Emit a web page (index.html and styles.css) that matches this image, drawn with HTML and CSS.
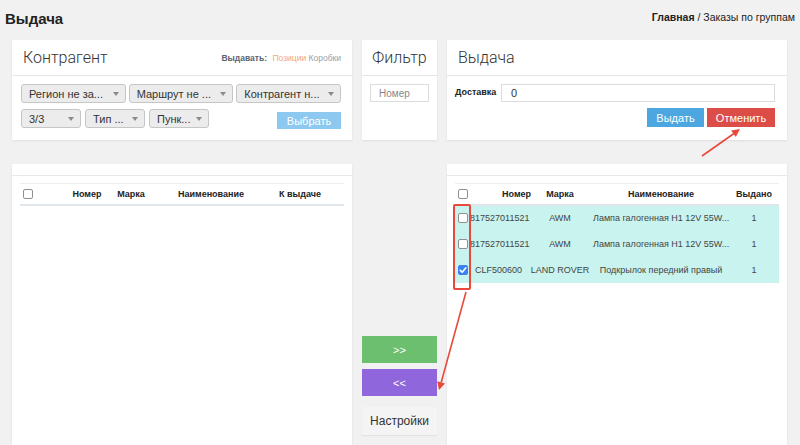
FILE: index.html
```html
<!DOCTYPE html>
<html lang="ru">
<head>
<meta charset="utf-8">
<link rel="stylesheet" href="styles.css">
</head>
<body>
<div class="page">
  <div class="topbar">
    <h1 class="title">Выдача</h1>
    <div class="crumbs"><b>Главная</b> / Заказы по группам</div>
  </div>

  <div class="grid">
    <div class="card">
      <div class="card-head">
        <span class="head-title">Контрагент</span>
        <span class="mode"><b>Выдавать:</b> <span class="mode-on">Позиции</span> <span class="mode-off">Коробки</span></span>
      </div>
      <div class="card-body filters">
        <div class="sel-row">
          <div class="sel sel-lg"><span>Регион не за...</span><i class="caret"></i></div>
          <div class="sel sel-lg"><span>Маршрут не ...</span><i class="caret"></i></div>
          <div class="sel sel-lg"><span>Контрагент н...</span><i class="caret"></i></div>
        </div>
        <div class="sel-row row2">
          <div class="sel sel-sm"><span>3/3</span><i class="caret"></i></div>
          <div class="sel sel-sm"><span>Тип ...</span><i class="caret"></i></div>
          <div class="sel sel-sm"><span>Пунк...</span><i class="caret"></i></div>
          <button class="btn btn-light-blue pick">Выбрать</button>
        </div>
      </div>
    </div>

    <div class="card">
      <div class="card-head center"><span class="head-title">Фильтр</span></div>
      <div class="card-body filter-body">
        <div class="inp inp-num">Номер</div>
      </div>
    </div>

    <div class="card">
      <div class="card-head"><span class="head-title">Выдача</span></div>
      <div class="card-body issue-body">
        <div class="deliv">
          <span class="lbl">Доставка</span>
          <div class="inp inp-wide">0</div>
        </div>
        <div class="acts">
          <button class="btn btn-blue">Выдать</button>
          <button class="btn btn-red">Отменить</button>
        </div>
      </div>
    </div>

    <div class="card tall">
      <div class="strip"></div>
      <div class="tbl-wrap">
        <table class="tbl tbl-left">
          <colgroup><col class="c1"><col class="c2"><col class="c3"><col class="c4"><col class="c5"><col></colgroup>
          <thead><tr><th class="cb-cell"><span class="cb"></span></th><th>Номер</th><th>Марка</th><th>Наименование</th><th>К выдаче</th><th></th></tr></thead>
        </table>
      </div>
    </div>

    <div class="mid">
      <button class="btn btn-green mbtn">&gt;&gt;</button>
      <button class="btn btn-purple mbtn">&lt;&lt;</button>
      <button class="btn btn-gray mbtn set">Настройки</button>
    </div>

    <div class="card tall">
      <div class="strip"></div>
      <div class="tbl-wrap">
        <table class="tbl tbl-right">
          <colgroup><col class="r1"><col class="r2"><col class="r3"><col class="r4"><col></colgroup>
          <thead><tr><th class="cb-cell"><span class="cb"></span></th><th class="th-num">Номер</th><th>Марка</th><th>Наименование</th><th>Выдано</th></tr></thead>
          <tbody>
            <tr><td class="cb-cell"><span class="cb"></span></td><td>817527011521</td><td>AWM</td><td>Лампа галогенная H1 12V 55W...</td><td>1</td></tr>
            <tr><td class="cb-cell"><span class="cb"></span></td><td>817527011521</td><td>AWM</td><td>Лампа галогенная H1 12V 55W...</td><td>1</td></tr>
            <tr><td class="cb-cell"><span class="cb checked"><svg viewBox="0 0 10 10" width="10" height="10"><path d="M2.2 5.2 L4.2 7.2 L7.9 2.8" fill="none" stroke="#fff" stroke-width="1.6" stroke-linecap="round" stroke-linejoin="round"/></svg></span></td><td>CLF500600</td><td>LAND ROVER</td><td>Подкрылок передний правый</td><td>1</td></tr>
          </tbody>
        </table>
      </div>
    </div>
  </div>

  <svg class="marks" width="800" height="445" viewBox="0 0 800 445">
    <rect x="454" y="205" width="16" height="84" fill="none" stroke="#e8493a" stroke-width="2" rx="1"/>
    <line x1="702" y1="156" x2="734" y2="133.5" stroke="#e8493a" stroke-width="1.6"/>
    <polygon points="740,129 735.8,136.9 731.2,130.5" fill="#e8493a"/>
    <line x1="466" y1="292" x2="441.2" y2="382.5" stroke="#e8493a" stroke-width="1.6"/>
    <polygon points="439,390 445,383.4 437.2,381.2" fill="#e8493a"/>
  </svg>
</div>
</body>
</html>
```

FILE: styles.css
```css
* { box-sizing: border-box; }
html, body { margin: 0; padding: 0; }
body {
  background: #f1f1f1;
  font-family: "Liberation Sans", Arial, sans-serif;
  color: #333;
  overflow: hidden;
}
.page { position: relative; width: 800px; height: 445px; overflow: hidden; }

.topbar {
  height: 40px;
  display: flex;
  justify-content: space-between;
  align-items: flex-start;
  padding: 0 5px;
}
.title {
  margin: 10px 0 0 0;
  font-size: 15px;
  font-weight: bold;
  color: #222;
}
.crumbs {
  margin-top: 11px;
  font-size: 10.5px;
  color: #222;
}

.grid {
  display: grid;
  grid-template-columns: 340px 75px 340px;
  column-gap: 10px;
  row-gap: 24px;
  padding-left: 12px;
  grid-template-rows: 100px auto;
}

.card {
  background: #fff;
  display: flex;
  flex-direction: column;
  box-shadow: 0 1px 2px rgba(0,0,0,0.08);
}
.card-head {
  height: 35px;
  flex: none;
  display: flex;
  align-items: center;
  justify-content: space-between;
  padding: 0 11px 0 11px;
}
.card-head.center { justify-content: center; padding: 0; }
.head-title {
  font-family: Roboto, "Liberation Sans", sans-serif;
  font-weight: 300;
  font-size: 16px;
  color: #333;
}
.mode { font-size: 8.5px; color: #999; }
.mode b { color: #5b6472; margin-right: 3px; }
.mode-on { color: #f3a77a; }
.mode-off { color: #9aa0a8; }

.card-body {
  flex: 1;
  border-top: 1px solid #e6e6e6;
}
.filters { padding: 8px 11px 8px 9px; }
.sel-row { display: flex; gap: 3px; }
.sel-row.row2 { margin-top: 6px; gap: 4px; }
.sel {
  height: 19px;
  border: 1px solid #c6c6c6;
  border-radius: 3px;
  background: #ececec;
  display: flex;
  align-items: center;
  justify-content: space-between;
  padding: 0 6px 0 7px;
  font-size: 11px;
  color: #333;
  white-space: nowrap;
}
.sel-lg { width: 105px; }
.sel-sm { width: 60px; }
.caret {
  width: 0; height: 0;
  border-left: 3px solid transparent;
  border-right: 3px solid transparent;
  border-top: 4px solid #8a8a8a;
}

.btn {
  border: 0;
  margin: 0;
  font-family: "Liberation Sans", Arial, sans-serif;
  font-size: 11px;
  color: #fff;
  cursor: pointer;
}
.btn-light-blue { background: #8cc8f0; }
.btn-blue { background: #4ca7e0; }
.btn-red { background: #dc4d47; }
.btn-green { background: #6bbf6f; }
.btn-purple { background: #8f66db; }
.btn-gray { background: #f4f4f4; color: #333; box-shadow: 0 1px 1px rgba(0,0,0,0.06); }
.pick { margin-left: auto; width: 64px; height: 17px; margin-top: 3px; }

.filter-body { padding: 8px 8px 0 8px; }
.inp {
  height: 18px;
  border: 1px solid #dcdcdc;
  background: #fff;
  font-size: 10px;
  display: flex;
  align-items: center;
}
.inp-num { width: 59px; color: #888; padding-left: 8px; }

.issue-body { padding: 8px 12px 0 8px; }
.deliv { display: flex; align-items: center; }
.lbl { font-size: 9px; font-weight: bold; color: #222; width: 46px; align-self: flex-start; padding-top: 3px; }
.inp-wide { flex: 1; padding-left: 9px; font-size: 11px; color: #333; }
.acts { display: flex; justify-content: flex-end; gap: 3px; margin-top: 6px; }
.acts .btn { height: 19px; }
.btn-blue { width: 57px; }
.btn-red { width: 68px; }

.tall { min-height: 300px; }
.strip { height: 12px; flex: none; border-bottom: 1px solid #e8e8e8; }
.tbl-wrap { padding: 7px 8px 0 8px; }
.tbl {
  width: 100%;
  border-collapse: collapse;
  table-layout: fixed;
  font-size: 9px;
}
.tbl thead tr { border-top: 1px solid #eeeeee; border-bottom: 2px solid #dfe6ec; }
.tbl th {
  height: 21px;
  font-weight: bold;
  color: #222;
  text-align: center;
  padding: 0;
  white-space: nowrap;
}
.tbl td {
  height: 26px;
  color: #444;
  text-align: center;
  padding: 0;
  white-space: nowrap;
  overflow: visible;
}
.tbl tbody tr { background: #c9f3ee; }
.tbl th.cb-cell, .tbl td.cb-cell { text-align: left; padding-left: 3px; }
.cb {
  display: inline-block;
  width: 10px; height: 10px;
  border: 1px solid #8f8f8f;
  border-radius: 2px;
  background: #fff;
  vertical-align: middle;
}
.cb.checked { background: #3b82f0; border-color: #3b82f0; position: relative; }
.cb.checked svg { position: absolute; left: -1px; top: -1px; }

.c1 { width: 40px; } .c2 { width: 54px; } .c3 { width: 34px; } .c4 { width: 126px; } .c5 { width: 52px; }
.r1 { width: 15px; } .r2 { width: 57px; } .r3 { width: 66px; } .r4 { width: 136px; }
.th-num { padding-left: 32px !important; }

.mid {
  display: flex;
  flex-direction: column;
  padding-top: 172px;
}
.mbtn { width: 75px; height: 27px; }
.mbtn + .mbtn { margin-top: 6px; }
.mbtn.set { margin-top: 11px; height: 28px; font-size: 12px; }

.marks { position: absolute; left: 0; top: 0; pointer-events: none; }
```
